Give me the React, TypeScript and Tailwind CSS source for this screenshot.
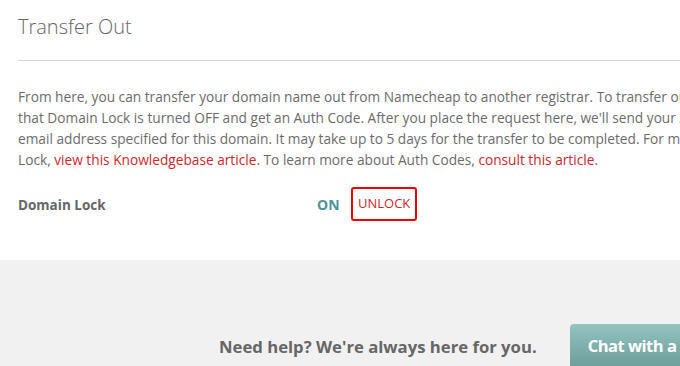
const bodyFont = { fontFamily: '"Open Sans", "Liberation Sans", sans-serif' };

export default function App() {
  const lines = [
    'From here, you can transfer your domain name out from Namecheap to another registrar. To transfer out your domain, make sure',
    "that Domain Lock is turned OFF and get an Auth Code. After you place the request here, we'll send your Auth Code to the",
    'email address specified for this domain. It may take up to 5 days for the transfer to be completed. For more information about Domain',
  ];

  return (
    <div
      className="w-[680px] h-[366px] overflow-hidden bg-white flex flex-col text-[#6b6b6b]"
      style={bodyFont}
    >
      {/* Transfer Out panel */}
      <div className="pl-[18px] pt-[13px]">
        <h1 className="text-[20px] font-light leading-[28px] text-[#666] whitespace-nowrap">
          Transfer Out
        </h1>
        <div className="mt-[19px] h-px bg-[#d6d6d6]" />

        <div className="mt-[25px] text-[13.7px] leading-[21px] whitespace-nowrap">
          {lines.map((l, i) => (
            <p key={i}>{l}</p>
          ))}
          <p>
            Lock, <a className="text-[#d0262d]">view this Knowledgebase article</a>. To learn more about
            Auth Codes, <a className="text-[#d0262d]">consult this article</a>.
          </p>
        </div>

        <div className="mt-[17px] flex items-center h-[34px]">
          <span className="w-[299px] pt-[3px] text-[13.5px] font-bold text-[#666]">Domain Lock</span>
          <span className="w-[34px] text-[14px] font-bold text-[#4f9297]">ON</span>
          <button className="h-[34px] px-[5px] border-2 border-[#ee0000] rounded-[3px] text-[13px] text-[#d6262d]">
            UNLOCK
          </button>
        </div>
      </div>

      {/* Help strip */}
      <div className="mt-[39px] flex-1 bg-[#f1f1f1] flex items-end pl-[219px]">
        <div className="flex items-end gap-[33px] whitespace-nowrap">
          <span className="mb-[7px] text-[16.7px] font-bold text-[#666]">
            Need help? We're always here for you.
          </span>
          <button className="h-[42px] pl-[18px] pr-[24px] pt-[3px] rounded-t-[4px] bg-gradient-to-b from-[#93c4c0] to-[#6f9e9b] text-white text-[16.5px] tracking-[-0.5px] font-bold text-left">
            Chat with a Live Person
          </button>
        </div>
      </div>
    </div>
  );
}
